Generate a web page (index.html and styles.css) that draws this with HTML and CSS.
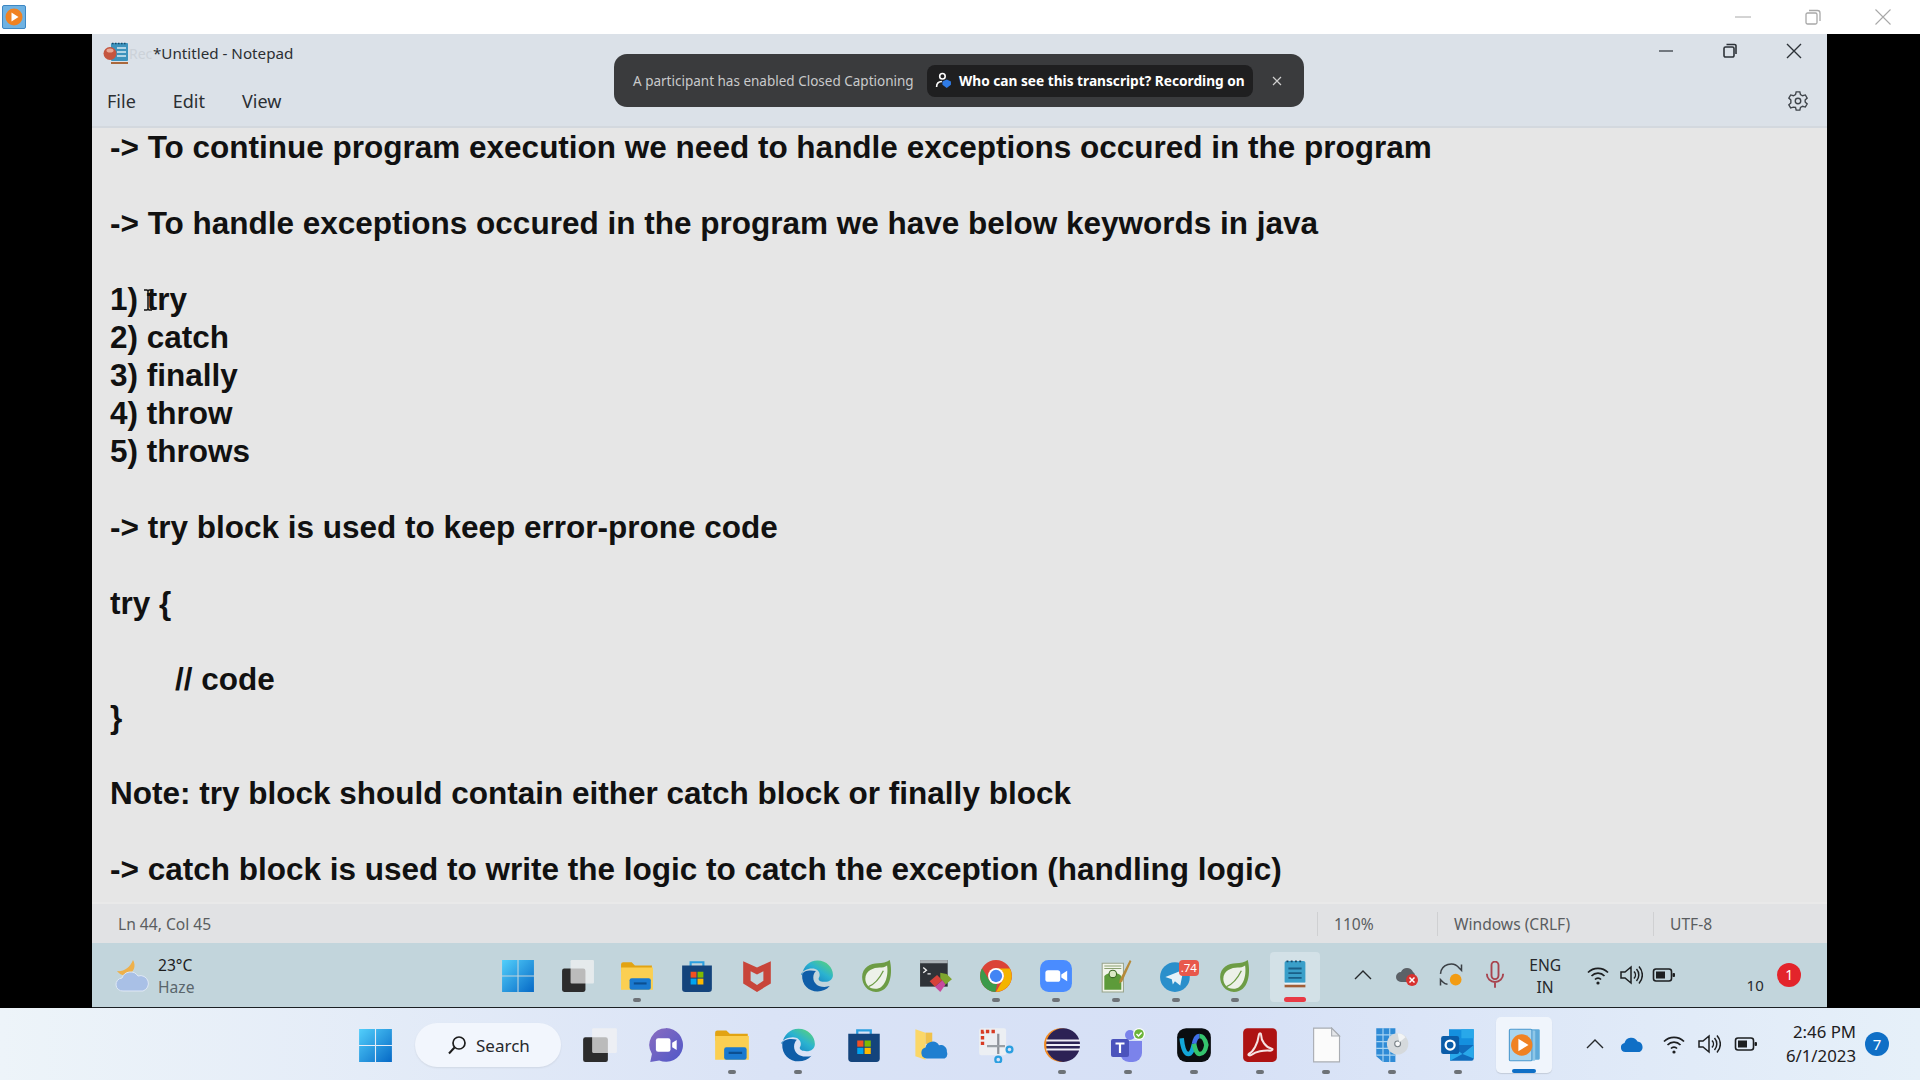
FILE: index.html
```html
<!DOCTYPE html>
<html>
	<head>
		<meta charset="UTF-8">
		<title>Untitled - Notepad</title>
		<link rel="stylesheet" href="styles.css">
	</head>
	<body>
		<svg class="defs" aria-hidden="true">
			<defs>
				<linearGradient id="gWin" x1="0" y1="0" x2="1" y2="1"><stop offset="0" stop-color="#52cffb"/><stop offset="1" stop-color="#0669c6"/></linearGradient>
				<linearGradient id="gChat" x1="0" y1="0" x2="1" y2="1"><stop offset="0" stop-color="#8a6cc0"/><stop offset="1" stop-color="#4f58c8"/></linearGradient>
				<linearGradient id="gEdge" x1="0" y1="1" x2="1" y2="0"><stop offset="0" stop-color="#0c6cc0"/><stop offset=".55" stop-color="#2bb3d0"/><stop offset="1" stop-color="#62d86a"/></linearGradient>
				<symbol id="i-win" viewBox="0 0 32 32">
					<path fill="url(#gWin)" d="M1 1h14.500v14.500H1zM16.500 1H31v14.500H16.500zM1 16.500h14.500V31H1zM16.500 16.500H31V31H16.500z"/>
				</symbol>
				<symbol id="i-task" viewBox="0 0 32 32">
					<rect x="1" y="9" width="22" height="22" rx="2" fill="#2c2c2c"/>
					<rect x="9" y="1" width="22" height="22" rx="1" fill="#f2f2f2" fill-opacity=".72"/>
				</symbol>
				<symbol id="i-chat" viewBox="0 0 32 32">
					<path fill="url(#gChat)" d="M16 1a15 15 0 1 1-6 28.700L2 31l1.500-7A15 15 0 0 1 16 1z"/>
					<rect x="7" y="10" width="13" height="12" rx="2" fill="#fff"/>
					<path fill="#fff" d="M21.500 14l4-2.500v9l-4-2.500z"/>
				</symbol>
				<symbol id="i-folder" viewBox="0 0 32 32">
					<path fill="#e2a312" d="M1 5a2 2 0 0 1 2-2h8l3 3h16v6H1z"/>
					<path fill="#fbcf52" d="M1 8h30v21H1z"/>
					<rect x="9" y="18" width="20" height="11" rx="2" fill="#1a79cf"/>
					<rect x="13" y="22" width="12" height="2" fill="#0b4f91"/>
				</symbol>
				<symbol id="i-store" viewBox="0 0 32 32">
					<path fill="none" stroke="#2b9fe0" stroke-width="2" d="M10 7V3h12v4"/>
					<path fill="#14447c" d="M2 6h28v22a3 3 0 0 1-3 3H5a3 3 0 0 1-3-3z"/>
					<rect x="10" y="12" width="5.500" height="5.500" fill="#f25022"/>
					<rect x="16.500" y="12" width="5.500" height="5.500" fill="#7fba00"/>
					<rect x="10" y="18.500" width="5.500" height="5.500" fill="#00a4ef"/>
					<rect x="16.500" y="18.500" width="5.500" height="5.500" fill="#ffb900"/>
				</symbol>
				<symbol id="i-mcafee" viewBox="0 0 32 32">
					<path fill="#c8453a" d="M3 2l13 6 13-6v21L16 31 3 23z"/>
					<path fill="#c2d5dc" d="M10 11.500l6 3 6-3v9l-6 4-6-4z"/>
				</symbol>
				<symbol id="i-edge" viewBox="0 0 32 32">
					<path fill="url(#gEdge)" d="M2 15C3 7 9 1.500 16.500 1.500 25 1.500 31 8 31 15c0 4-3 6.500-7.500 6.500-3.500 0-6-1-6-3 0-1 1-1.500 1-3.500 0-3.500-3-6-7-6-5 0-9.500 2.500-10.500 5.500z"/>
					<path fill="#0f5ea8" d="M2 15c-.5 9.500 6.500 15.500 14.500 15.500 4.500 0 8.500-1.500 11.500-5-1.500.5-3 .8-5 .8-6.500 0-10.500-4-10.500-9 0-2.500 1-4.500 2.500-6C9 10 2.500 11 2 15z"/>
				</symbol>
				<symbol id="i-spring" viewBox="0 0 32 32">
					<path fill="#6d9c45" d="M28 1c3 12 1 30-13 30C7 31 2 24 2 17 2 8 10 4 17 4c4 0 8-1 11-3z"/>
					<path fill="#edf1e9" d="M25.500 6c1.500 10-2 22-11 22C8 28 5 23 5 18.500 5 11 13 8 18.500 8c2.500 0 5-.5 7-2z"/>
					<path fill="none" stroke="#6d9c45" stroke-width="1.200" d="M8 26c5-2 10-7 14-15"/>
				</symbol>
				<symbol id="i-term" viewBox="0 0 32 32">
					<rect x="1" y="1" width="26" height="25" fill="#2f3338"/>
					<rect x="1" y="1" width="26" height="3" fill="#a9b0b4"/>
					<path fill="none" stroke="#eee" stroke-width="1.300" d="M4 8l3 2.500L4 13M8 14h3"/>
					<path fill="#d6423a" d="M10 21l7-6 5 5-7 6z"/>
					<path fill="#7ea52d" d="M20 13l6 1 5 5-6 5-5-6z"/>
					<path fill="#c84a9d" d="M15 26l7-6 3 4-5 7z"/>
				</symbol>
				<symbol id="i-chrome" viewBox="0 0 32 32">
					<circle cx="16" cy="16" r="15" fill="#db4437"/>
					<path fill="#f4b400" d="M16 9h13.100A15 15 0 0 1 16 31l6.500-11.500a7.500 7.500 0 0 0-.5-8z"/>
					<path fill="#3c9a4a" d="M2.900 8.800L10 20.500a7.500 7.500 0 0 0 7 3L15.500 31A15 15 0 0 1 2.900 8.800z"/>
					<circle cx="16" cy="16" r="7.500" fill="#fff"/>
					<circle cx="16" cy="16" r="5.800" fill="#4285f4"/>
				</symbol>
				<symbol id="i-zoom" viewBox="0 0 32 32">
					<rect x="1" y="1" width="30" height="30" rx="8" fill="#4a8cff"/>
					<rect x="6" y="10.500" width="14" height="11" rx="2.500" fill="#fff"/>
					<path fill="#fff" d="M21 14.500l5.500-3.500v10L21 17.500z"/>
				</symbol>
				<symbol id="i-npp" viewBox="0 0 32 32">
					<path fill="#f1f4ea" stroke="#9aa58c" d="M3 4h20v27H3z"/>
					<path fill="#5d9b3a" d="M5 16c4-4 12-4 16 0v13H5z"/>
					<circle cx="13" cy="14" r="3.500" fill="#dbe9c6" stroke="#3c6a25"/>
					<path fill="none" stroke="#8aa070" d="M5 9h16M5 6.500h16"/>
					<path fill="#b58a3a" d="M29 1l1.500 1L22 21l-3 2 .5-3.500z"/>
				</symbol>
				<symbol id="i-tg" viewBox="0 0 32 32">
					<circle cx="15" cy="17" r="14" fill="#2a8fcb"/>
					<path fill="#e6f1f8" d="M6 17l17-7-3 15-5-4-2 3-1-5z"/>
				</symbol>
				<symbol id="i-note" viewBox="0 0 32 36">
					<rect x="5" y="2" width="22" height="24" rx="2" fill="#3a9fc9"/>
					<path stroke="#1a5f87" stroke-width="2" d="M9 10h14M9 15h14M9 20h14"/>
					<path stroke="#174a6b" stroke-width="2" stroke-dasharray="2 2.500" d="M7 2.500h18"/>
					<rect x="5" y="27" width="22" height="3" fill="#a15e36"/>
					<rect x="5" y="25" width="22" height="2" fill="#eef2f4"/>
				</symbol>
				<symbol id="i-cloudfolder" viewBox="0 0 32 32">
					<path fill="#fbd768" d="M3 2l9 3v24l-9-3z"/>
					<path fill="#f0c14b" d="M12 5h6v10H12z"/>
					<path fill="#1f7fd0" d="M13 28a5 5 0 0 1-1-9.800 6.500 6.500 0 0 1 12-2 5.500 5.500 0 0 1 7 5.800 5 5 0 0 1-2 6z"/>
				</symbol>
				<symbol id="i-snip" viewBox="0 0 32 32">
					<rect x="1" y="1" width="24" height="24" rx="2" fill="#eceff3"/>
					<path fill="none" stroke="#d83b23" stroke-width="3" stroke-dasharray="3 2" d="M4 16V4h13"/>
					<path stroke="#8c9198" stroke-width="2" d="M18 6v18"/>
					<path stroke="#9aa0a6" stroke-width="2" d="M8 17h16"/>
					<circle cx="28" cy="20" r="2.600" fill="none" stroke="#2a9fe0" stroke-width="2"/>
					<circle cx="18" cy="29" r="2.600" fill="none" stroke="#2a9fe0" stroke-width="2"/>
				</symbol>
				<symbol id="i-eclipse" viewBox="0 0 32 32">
					<circle cx="15" cy="16" r="15" fill="#f08a24"/>
					<circle cx="17" cy="16" r="15" fill="#2c2255"/>
					<path stroke="#f0eef8" stroke-width="1.800" d="M2 12h30M2 16h30M2 20h30"/>
				</symbol>
				<symbol id="i-teams" viewBox="0 0 36 36">
					<circle cx="20" cy="8" r="5" fill="#7b83eb"/>
					<path fill="#7b83eb" d="M10 14h22v12a9 9 0 0 1-9 9h-4a9 9 0 0 1-9-9z"/>
					<rect x="1" y="12" width="18" height="18" rx="2" fill="#4b53bc"/>
					<path stroke="#fff" stroke-width="2.200" d="M5.500 16.500h9M10 16.500V26"/>
					<circle cx="29" cy="7" r="6" fill="#fff"/>
					<circle cx="29" cy="7" r="4.800" fill="#6bb33a"/>
					<path fill="none" stroke="#fff" stroke-width="1.500" d="M26.500 7l2 2 3.200-3.500"/>
				</symbol>
				<symbol id="i-webex" viewBox="0 0 32 32">
					<rect x="1" y="1" width="30" height="30" rx="8" fill="#0a0d10"/>
					<path fill="none" stroke="#13a6d8" stroke-width="4" d="M5 10c1 9 3 14 6 14s4-5 5-9"/>
					<path fill="none" stroke="#3f6fe8" stroke-width="4" d="M16 15c1-4 2-7 5-7"/>
					<path fill="none" stroke="#35c46e" stroke-width="4" d="M21 8c3 0 5 3 6 8-1 6-3 8-6 8s-4-5-5-9"/>
				</symbol>
				<symbol id="i-acro" viewBox="0 0 32 32">
					<rect x="1" y="1" width="30" height="30" rx="4" fill="#ae1313"/>
					<path fill="none" stroke="#f6e4e4" stroke-width="1.800" d="M6 24c4-2 8-9 9-17 .2-2 2-2 2 0 0 5 4 11 9 12 2 .5 1 2-1 2-6-.5-13 1-16 3.500-2 1.500-4 .5-3-.5z"/>
				</symbol>
				<symbol id="i-file" viewBox="0 0 32 32">
					<path fill="#fbfbfb" stroke="#a9adb3" d="M5 1h16l7 7v23H5z"/>
					<path fill="#e4e6e9" stroke="#a9adb3" d="M21 1v7h7z"/>
				</symbol>
				<symbol id="i-disc" viewBox="0 0 32 32">
					<path fill="#2f8bd6" d="M2 1h17v30H8L2 26z"/>
					<path stroke="#a9d4f2" d="M2 7h17M2 13h17M2 19h17M2 25h17M8 1v30M14 1v30"/>
					<circle cx="21" cy="15" r="9.500" fill="#d5d9dc"/>
					<circle cx="21" cy="15" r="2.600" fill="#f8f9fa" stroke="#7a8288"/>
					<path fill="#f2f4f5" d="M21 5.500a9.500 9.500 0 0 1 7 3.500l-5.500 4.500z"/>
				</symbol>
				<symbol id="i-outlook" viewBox="0 0 32 32">
					<rect x="8" y="2" width="22" height="14" fill="#1490df"/>
					<rect x="19" y="2" width="11" height="8" fill="#28a8ea"/>
					<path fill="#0f6cbd" d="M9 16h21v12a2 2 0 0 1-2 2H9z"/>
					<path fill="#28a8ea" d="M9 16l11 8 10-8v12l-10-4-11 6z"/>
					<rect x="1" y="8" width="16" height="16" rx="2" fill="#0a5ca8"/>
					<circle cx="9" cy="16" r="4" fill="none" stroke="#fff" stroke-width="2"/>
				</symbol>
				<symbol id="i-player" viewBox="0 0 32 32">
					<rect x="10" y="2" width="20" height="27" rx="1" fill="#5faad9"/>
					<rect x="6" y="3" width="20" height="27" rx="1" fill="#8ec7e8"/>
					<rect x="3" y="2" width="20" height="28" rx="1" fill="#a9d5ee" stroke="#4f9bcf"/>
					<circle cx="14" cy="16" r="9.500" fill="#f08222"/>
					<path fill="#fff" d="M11 10.500L20 16l-9 5.500z"/>
				</symbol>
				<symbol id="i-wifi" viewBox="0 0 24 24">
					<path fill="none" stroke="currentColor" stroke-width="1.700" d="M2 9.500a14 14 0 0 1 20 0M5.500 13a9 9 0 0 1 13 0M9 16.500a4 4 0 0 1 6 0"/>
					<circle cx="12" cy="20" r="1.600" fill="currentColor"/>
				</symbol>
				<symbol id="i-vol" viewBox="0 0 24 24">
					<path fill="none" stroke="currentColor" stroke-width="1.500" d="M2 9h4l6-5v16l-6-5H2zM15 8.500a5 5 0 0 1 0 7M17.500 6a9 9 0 0 1 0 12M20 3.500a12.500 12.500 0 0 1 0 17"/>
				</symbol>
				<symbol id="i-batt" viewBox="0 0 24 24">
					<rect x="1.500" y="6" width="18" height="12" rx="2.500" fill="none" stroke="currentColor" stroke-width="1.600"/>
					<rect x="4" y="8.500" width="9" height="7" fill="currentColor"/>
					<rect x="20.500" y="10" width="2.500" height="4" rx="1" fill="currentColor"/>
				</symbol>
				<symbol id="i-chev" viewBox="0 0 20 12">
					<path fill="none" stroke="currentColor" stroke-width="1.400" d="M2 10l8-8 8 8"/>
				</symbol>
			</defs>
		</svg>

		<div class="screen">
			<div class="topbar">
				<svg class="top-logo" viewBox="0 0 24 24">
					<rect x="0.500" y="0.500" width="23" height="23" rx="1.500" fill="#6fb2e2" stroke="#3c87c4"/>
					<circle cx="12" cy="12" r="8.500" fill="#f08222"/>
					<path fill="#fff" d="M9.500 7.500L16.500 12l-7 4.500z"/>
				</svg>
				<div class="winbtns">
					<svg class="wb" viewBox="0 0 16 16"><path stroke="#a8a8a8" stroke-width="1" d="M0 8h16"/></svg>
					<svg class="wb" viewBox="0 0 16 16"><path fill="none" stroke="#a8a8a8" stroke-width="1.300" d="M1 5.500a1.500 1.500 0 0 1 1.500-1.500h8A1.500 1.500 0 0 1 12 5.500v8a1.500 1.500 0 0 1-1.500 1.500h-8A1.500 1.500 0 0 1 1 13.500zM4 1.500h8.500a2.500 2.500 0 0 1 2.500 2.500v8"/></svg>
					<svg class="wb" viewBox="0 0 16 16"><path stroke="#a8a8a8" stroke-width="1.100" d="M.5.500l15 15M15.500.500l-15 15"/></svg>
				</div>
			</div>

			<div class="stage">
				<div class="window">
					<div class="head">
						<div class="titlerow">
							<svg class="title-icon" viewBox="0 0 26 24">
								<rect x="8" y="2" width="17" height="18" rx="1" fill="#3d93bd"/>
								<path stroke="#d9ecf4" stroke-width="1.500" d="M14 7h9M14 11h9M14 15h9"/>
								<path stroke="#174a6b" stroke-width="1.500" stroke-dasharray="1.500 1.500" d="M9 2.500h15"/>
								<rect x="8" y="21" width="17" height="2" fill="#a9683c"/>
								<circle cx="7" cy="12.500" r="6.500" fill="#c4553f"/>
								<ellipse cx="7" cy="9.500" rx="3.500" ry="2" fill="#e8a794"/>
							</svg>
							<span class="ghost">Rec</span>
							<span class="title">*Untitled - Notepad</span>
							<div class="npbtns">
								<svg class="nb" viewBox="0 0 16 16"><path stroke="#2d3238" stroke-width="1.200" d="M1 8h14"/></svg>
								<svg class="nb" viewBox="0 0 16 16"><path fill="none" stroke="#2d3238" stroke-width="1.600" d="M2 5.500a1.500 1.500 0 0 1 1.500-1.500h7A1.500 1.500 0 0 1 12 5.500v7a1.500 1.500 0 0 1-1.500 1.500h-7A1.500 1.500 0 0 1 2 12.500zM4.500 1.500h8a1.500 1.500 0 0 1 1.500 1.500v8"/></svg>
								<svg class="nb" viewBox="0 0 16 16"><path stroke="#2d3238" stroke-width="1.400" d="M1 1l14 14M15 1L1 15"/></svg>
							</div>
						</div>
						<div class="menurow">
							<span class="menu">File</span>
							<span class="menu">Edit</span>
							<span class="menu">View</span>
							<svg class="gear" viewBox="0 0 24 24"><path fill="none" stroke="#3f444a" stroke-width="1.500" d="M10 2h4l.7 3 2.300 1.300 3-.9 2 3.400-2.200 2.100v2.200l2.200 2.100-2 3.400-3-.9-2.300 1.300-.7 3h-4l-.7-3L7 18.700l-3 .9-2-3.400 2.200-2.100V12 10.900L2 8.800l2-3.400 3 .9L9.300 5z"/><circle cx="12" cy="12" r="3" fill="none" stroke="#3f444a" stroke-width="1.500"/></svg>
						</div>
					</div>

					<div class="toast">
						<span class="toast-msg">A participant has enabled Closed Captioning</span>
						<span class="toast-pill">
							<svg class="toast-ico" viewBox="0 0 16 16">
								<circle cx="7" cy="4" r="2.600" fill="none" stroke="#fff" stroke-width="1.500"/>
								<path fill="none" stroke="#fff" stroke-width="1.500" d="M1.500 14c0-3 2-5 5-5"/>
								<path fill="#2f7be6" d="M11 7l4 2v3l-4 3-4-3V9z"/>
							</svg>
							Who can see this transcript? Recording on
						</span>
						<svg class="toast-x" viewBox="0 0 10 10"><path stroke="#cfcfcf" stroke-width="1.200" d="M1 1l8 8M9 1L1 9"/></svg>
					</div>

					<div class="editor">
						<pre class="doc">-&gt; To continue program execution we need to handle exceptions occured in the program

-&gt; To handle exceptions occured in the program we have below keywords in java

1) try
2) catch
3) finally
4) throw
5) throws

-&gt; try block is used to keep error-prone code

try {

<span class="indent">// code</span>
}

Note: try block should contain either catch block or finally block

-&gt; catch block is used to write the logic to catch the exception (handling logic)</pre>
						<svg class="ibeam" viewBox="0 0 10 22"><path fill="none" stroke="#111" stroke-width="1.500" d="M1 1h3l1 1 1-1h3M5 2v18M1 21h3l1-1 1 1h3"/></svg>
					</div>

					<div class="status">
						<span class="cell-pos">Ln 44, Col 45</span>
						<span class="cell cell-zoom">110%</span>
						<span class="cell cell-eol">Windows (CRLF)</span>
						<span class="cell cell-enc">UTF-8</span>
					</div>

					<div class="innerbar">
						<div class="weather">
							<svg class="weather-ico" viewBox="0 0 36 36">
								<path fill="#eeb04a" d="M19 2a10 10 0 0 1-6 15A10 10 0 0 1 3 13c6 1 13-3 16-11z"/>
								<path fill="#a9c0e6" stroke="#dfe8f5" d="M9 33a6.500 6.500 0 0 1-1-13 9 9 0 0 1 16-2 7.500 7.500 0 0 1 5 15z"/>
							</svg>
							<div class="weather-txt">
								<span>23°C</span>
								<span class="haze">Haze</span>
							</div>
						</div>
						<div class="apps">
							<span class="app"><svg class="ico"><use href="#i-win"/></svg></span>
							<span class="app"><svg class="ico"><use href="#i-task"/></svg></span>
							<span class="app"><svg class="ico"><use href="#i-folder"/></svg><i class="dot"></i></span>
							<span class="app"><svg class="ico"><use href="#i-store"/></svg></span>
							<span class="app"><svg class="ico"><use href="#i-mcafee"/></svg></span>
							<span class="app"><svg class="ico"><use href="#i-edge"/></svg></span>
							<span class="app"><svg class="ico"><use href="#i-spring"/></svg></span>
							<span class="app"><svg class="ico"><use href="#i-term"/></svg></span>
							<span class="app"><svg class="ico"><use href="#i-chrome"/></svg><i class="dot"></i></span>
							<span class="app"><svg class="ico"><use href="#i-zoom"/></svg><i class="dot"></i></span>
							<span class="app"><svg class="ico"><use href="#i-npp"/></svg><i class="dot"></i></span>
							<span class="app"><svg class="ico"><use href="#i-tg"/></svg><b class="tg-badge">.74</b><i class="dot"></i></span>
							<span class="app"><svg class="ico"><use href="#i-spring"/></svg><i class="dot"></i></span>
							<span class="app app-on"><svg class="ico"><use href="#i-note"/></svg><i class="bar-red"></i></span>
						</div>
						<div class="itray">
							<span class="it"><svg class="chev"><use href="#i-chev"/></svg></span>
							<span class="it">
								<svg class="tico" viewBox="0 0 24 24">
									<path fill="#5b6167" d="M6 19a5 5 0 0 1 0-10 6.500 6.500 0 0 1 12 0 4 4 0 0 1 2 3l-8 7z"/>
									<circle cx="17" cy="17" r="6" fill="#d8322f"/>
									<path stroke="#fff" stroke-width="1.500" d="M14.500 14.500l5 5M19.500 14.500l-5 5"/>
								</svg>
							</span>
							<span class="it">
								<svg class="tico tico-lg" viewBox="0 0 24 24">
									<path fill="none" stroke="#3b4045" stroke-width="1.300" d="M3 11a9 9 0 0 1 16-5l2 2V3M3 21v-5l2 2a7 7 0 0 0 4 2"/>
									<circle cx="16" cy="16" r="5" fill="#f29c13"/>
								</svg>
							</span>
							<span class="it">
								<svg class="tico tico-lg" viewBox="0 0 24 24"><path fill="none" stroke="#a8434e" stroke-width="1.600" d="M9 3.500a3 3 0 0 1 6 0v9a3 3 0 0 1-6 0zM5 11a7 7 0 0 0 14 0M12 18v5"/></svg>
							</span>
							<span class="lang">ENG<br>IN</span>
							<div class="net">
								<span class="nt"><svg class="tico"><use href="#i-wifi"/></svg></span>
								<span class="nt"><svg class="tico"><use href="#i-vol"/></svg></span>
								<span class="nt"><svg class="tico"><use href="#i-batt"/></svg></span>
							</div>
							<span class="ten">10</span>
							<span class="red-badge">1</span>
						</div>
					</div>
				</div>
			</div>

			<div class="taskbar">
				<span class="tb-start"><svg class="ico-start"><use href="#i-win"/></svg></span>
				<span class="search">
					<svg class="search-ico" viewBox="0 0 20 20"><circle cx="12" cy="8" r="6" fill="none" stroke="#1c1c1c" stroke-width="1.700"/><path stroke="#1c1c1c" stroke-width="2" d="M7.500 12.500L2 18.500"/></svg>
					Search
				</span>
				<div class="tb-apps">
					<span class="tb"><svg class="ico-tb"><use href="#i-task"/></svg></span>
					<span class="tb"><svg class="ico-tb"><use href="#i-chat"/></svg></span>
					<span class="tb"><svg class="ico-tb"><use href="#i-folder"/></svg><i class="dot"></i></span>
					<span class="tb"><svg class="ico-tb"><use href="#i-edge"/></svg><i class="dot"></i></span>
					<span class="tb"><svg class="ico-tb"><use href="#i-store"/></svg></span>
					<span class="tb"><svg class="ico-tb"><use href="#i-cloudfolder"/></svg></span>
					<span class="tb"><svg class="ico-tb"><use href="#i-snip"/></svg></span>
					<span class="tb"><svg class="ico-tb"><use href="#i-eclipse"/></svg><i class="dot"></i></span>
					<span class="tb"><svg class="ico-tb"><use href="#i-teams"/></svg><i class="dot"></i></span>
					<span class="tb"><svg class="ico-tb"><use href="#i-webex"/></svg><i class="dot"></i></span>
					<span class="tb"><svg class="ico-tb"><use href="#i-acro"/></svg><i class="dot"></i></span>
					<span class="tb"><svg class="ico-tb"><use href="#i-file"/></svg><i class="dot"></i></span>
					<span class="tb"><svg class="ico-tb"><use href="#i-disc"/></svg><i class="dot"></i></span>
					<span class="tb"><svg class="ico-tb"><use href="#i-outlook"/></svg><i class="dot"></i></span>
					<span class="tb tb-on"><svg class="ico-tb"><use href="#i-player"/></svg><i class="bar-blue"></i></span>
				</div>
				<div class="tb-tray">
					<span class="tt tt-chev"><svg class="chev"><use href="#i-chev"/></svg></span>
					<span class="tt tt-cloud">
						<svg class="tico" viewBox="0 0 24 24"><path fill="#0f6fc6" d="M5.500 20a4.500 4.500 0 0 1-1-8.900 7 7 0 0 1 13-1.500 5.500 5.500 0 0 1 2 10.400z"/></svg>
					</span>
					<span class="tt tt-wifi"><svg class="tico"><use href="#i-wifi"/></svg></span>
					<span class="tt tt-vol"><svg class="tico"><use href="#i-vol"/></svg></span>
					<span class="tt tt-batt"><svg class="tico"><use href="#i-batt"/></svg></span>
					<span class="clock">2:46 PM<br>6/1/2023</span>
					<span class="blue-badge">7</span>
				</div>
			</div>
		</div>
	</body>
</html>
```

FILE: styles.css
```css
*{
	box-sizing: border-box;
}
body{
	margin: 0;
	background: #000;
	font-family: "Noto Sans", "Open Sans", sans-serif;
	color: #1c1c1c;
	overflow: hidden;
}
.defs{
	position: absolute;
	width: 0;
	height: 0;
}
.screen{
	width: 1920px;
	height: 1080px;
	display: flex;
	flex-direction: column;
}

/* recorder title bar */
.topbar{
	height: 34px;
	background: #fff;
	display: flex;
	align-items: center;
	justify-content: space-between;
	padding-left: 2px;
}
.top-logo{
	width: 24px;
	height: 24px;
}
.winbtns{
	display: flex;
	align-items: center;
	gap: 54px;
	padding-right: 29px;
}
.wb{
	width: 16px;
	height: 16px;
}

.stage{
	height: 974px;
	background: #000;
	display: flex;
	justify-content: center;
}
.window{
	width: 1735px;
	margin-left: -1px;
	position: relative;
	display: flex;
	flex-direction: column;
	background: #e6e6e6;
}

/* notepad header */
.head{
	height: 94px;
	background: #dbe1e8;
	border-bottom: 2px solid #d3d8de;
	flex: none;
}
.titlerow{
	height: 38px;
	display: flex;
	align-items: center;
	padding-left: 11px;
	font-size: 15.2px;
	color: #2b2f33;
}
.title-icon{
	width: 26px;
	height: 24px;
}
.ghost{
	color: #ccd2d9;
	width: 24px;
	font-size: 14px;
}
.npbtns{
	margin-left: auto;
	display: flex;
	align-items: center;
	gap: 48px;
	padding: 0 25px 5px 0;
}
.nb{
	width: 16px;
	height: 16px;
}
.menurow{
	height: 54px;
	display: flex;
	align-items: center;
	padding: 4px 0 0 15px;
	font-size: 18px;
	color: #2b2f33;
}
.menu{
	margin-right: 37px;
}
.gear{
	margin-left: auto;
	margin-right: 18px;
	width: 22px;
	height: 22px;
}

/* captions toast */
.toast{
	position: absolute;
	left: 522px;
	top: 20px;
	width: 690px;
	height: 53px;
	background: #3a3b3d;
	border-radius: 13px;
	display: flex;
	align-items: center;
	padding-left: 19px;
	color: #c9cacb;
	font-size: 13.5px;
}
.toast-msg{
	width: 294px;
	white-space: nowrap;
}
.toast-pill{
	width: 326px;
	height: 32px;
	background: #1f1f20;
	border-radius: 8px;
	display: flex;
	align-items: center;
	gap: 7px;
	padding-left: 8px;
	color: #fff;
	font-weight: 700;
	font-size: 13.7px;
	white-space: nowrap;
}
.toast-ico{
	width: 17px;
	height: 17px;
}
.toast-x{
	width: 10px;
	height: 10px;
	margin-left: 19px;
}

/* text area */
.editor{
	flex: 1;
	position: relative;
	overflow: hidden;
}
.doc{
	margin: 0;
	padding: 0 0 0 18px;
	font-family: "Liberation Sans", Arial, sans-serif;
	font-weight: 700;
	font-size: 31.5px;
	line-height: 38px;
	color: #111;
}
.indent{
	margin-left: 65px;
}
.ibeam{
	position: absolute;
	left: 51px;
	top: 161px;
	width: 10px;
	height: 22px;
}

/* status bar */
.status{
	height: 41px;
	flex: none;
	background: #e1e2e4;
	border-top: 2px solid #e9e9e9;
	display: flex;
	align-items: center;
	font-size: 15.6px;
	color: #5a5d60;
}
.cell-pos{
	width: 1225px;
	padding-left: 26px;
}
.cell{
	height: 24px;
	line-height: 24px;
	border-left: 1px solid #cfd0d2;
	padding-left: 16px;
}
.cell-zoom{
	width: 120px;
}
.cell-eol{
	width: 216px;
}

/* taskbar inside the shared screen */
.innerbar{
	height: 65px;
	flex: none;
	background: #c2d5dc;
	border-bottom: 1px solid #1b2024;
	display: flex;
	align-items: flex-start;
}
.weather{
	width: 396px;
	height: 64px;
	display: flex;
	align-items: center;
	padding-left: 22px;
	gap: 8px;
	font-size: 15.6px;
}
.weather-ico{
	width: 36px;
	height: 36px;
	margin-top: 2px;
}
.weather-txt{
	display: flex;
	flex-direction: column;
	line-height: 22px;
	margin-top: 2px;
}
.haze{
	color: #5a666c;
}
.apps{
	display: flex;
}
.app{
	position: relative;
	width: 59.8px;
	height: 64px;
	display: flex;
	justify-content: center;
	padding-top: 16px;
}
.ico{
	width: 34px;
	height: 34px;
}
.app-on::before{
	content: "";
	position: absolute;
	left: 5px;
	right: 5px;
	top: 9px;
	bottom: 5px;
	background: #d3e1e7;
	border-radius: 4px;
}
.app-on .ico{
	position: relative;
}
.dot{
	position: absolute;
	left: 50%;
	margin-left: -4px;
	bottom: 5px;
	width: 8px;
	height: 4px;
	border-radius: 2px;
	background: #6d7277;
}
.bar-red{
	position: absolute;
	left: 50%;
	margin-left: -11px;
	bottom: 5px;
	width: 22px;
	height: 5px;
	border-radius: 3px;
	background: #e83a45;
}
.tg-badge{
	position: absolute;
	left: 33px;
	top: 17px;
	width: 20px;
	height: 16px;
	line-height: 16px;
	text-align: center;
	border-radius: 4px;
	background: #e8584c;
	color: #fff;
	font-size: 11.5px;
	font-weight: 400;
}
.itray{
	margin-left: 16px;
	height: 64px;
	display: flex;
	align-items: center;
	color: #26292c;
}
.it{
	width: 44px;
	display: flex;
	justify-content: center;
}
.chev{
	width: 20px;
	height: 12px;
	color: #26292c;
}
.tico{
	width: 24px;
	height: 24px;
	color: #1d1f21;
}
.tico-lg{
	width: 28px;
	height: 28px;
}
.lang{
	width: 56px;
	margin-top: 2px;
	text-align: center;
	font-size: 15.6px;
	line-height: 22px;
}
.net{
	display: flex;
	margin-left: 8px;
}
.nt{
	width: 33px;
	display: flex;
	justify-content: center;
}
.ten{
	width: 30px;
	margin-left: 60px;
	margin-top: 20px;
	text-align: center;
	font-size: 15px;
}
.red-badge{
	width: 24px;
	height: 24px;
	margin-left: 7px;
	border-radius: 50%;
	background: #e3242b;
	color: #fff;
	font-size: 14px;
	text-align: center;
	line-height: 24px;
}

/* real windows taskbar */
.taskbar{
	height: 72px;
	flex: none;
	background: linear-gradient(90deg, #edf4f9 0%, #dae3f6 40%, #d6e0f6 62%, #e6f0f9 100%);
	display: flex;
	align-items: flex-start;
	padding-left: 342px;
}
.tb-start{
	width: 66px;
	height: 72px;
	display: flex;
	justify-content: center;
	padding-top: 20px;
}
.ico-start{
	width: 35px;
	height: 35px;
}
.search{
	width: 146px;
	height: 44px;
	margin: 15px 0 0 7px;
	background: #f2f6fd;
	border-radius: 22px;
	box-shadow: 0 1px 2px rgba(0,0,0,.08);
	display: flex;
	align-items: center;
	padding-left: 32px;
	gap: 9px;
	font-size: 17px;
	color: #26292c;
}
.search-ico{
	width: 20px;
	height: 20px;
}
.tb-apps{
	display: flex;
	margin-left: 6px;
}
.tb{
	position: relative;
	width: 66px;
	height: 72px;
	display: flex;
	justify-content: center;
	padding-top: 19px;
}
.ico-tb{
	width: 36px;
	height: 36px;
}
.tb .dot{
	bottom: 6px;
}
.tb-on::before{
	content: "";
	position: absolute;
	left: 5px;
	right: 5px;
	top: 9px;
	bottom: 7px;
	background: #f0f5fc;
	border-radius: 5px;
	box-shadow: 0 1px 1px rgba(0,0,0,.12);
}
.tb-on .ico-tb{
	position: relative;
}
.bar-blue{
	position: absolute;
	left: 50%;
	margin-left: -12px;
	bottom: 7px;
	width: 24px;
	height: 4px;
	border-radius: 2px;
	background: #0f6fc6;
}
.tb-tray{
	display: flex;
	align-items: center;
	height: 72px;
	margin-left: 20px;
}
.tt{
	display: flex;
	justify-content: center;
}
.tt-chev{
	width: 36px;
}
.tt-cloud{
	width: 38px;
}
.tt-wifi{
	width: 46px;
}
.tt-vol{
	width: 24px;
}
.tt-batt{
	width: 50px;
}
.clock{
	width: 85px;
	text-align: right;
	font-size: 16.8px;
	line-height: 24px;
	color: #1e2022;
	white-space: nowrap;
}
.blue-badge{
	width: 24px;
	height: 24px;
	margin-left: 9px;
	border-radius: 50%;
	background: #0f6fc6;
	color: #fff;
	font-size: 15px;
	text-align: center;
	line-height: 24px;
}
```
